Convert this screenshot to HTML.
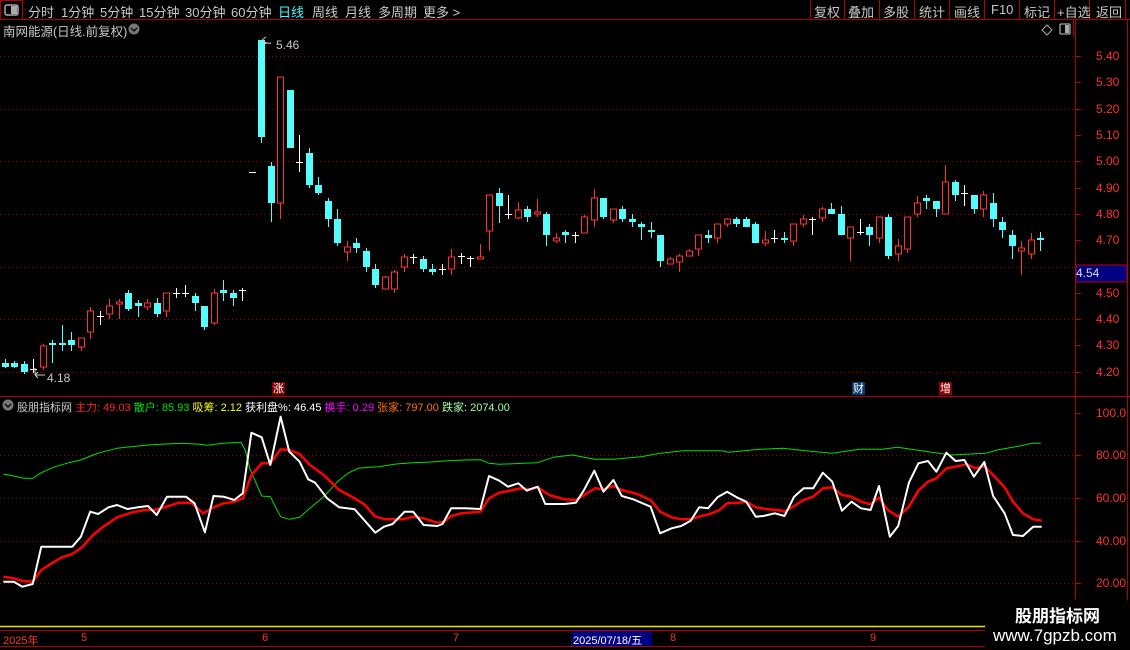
<!DOCTYPE html>
<html><head><meta charset="utf-8">
<style>
*{margin:0;padding:0;box-sizing:border-box}
body{width:1130px;height:650px;background:#000;overflow:hidden;position:relative;font-family:"Liberation Sans","Noto Sans CJK SC",sans-serif;color:#c8c8c8;font-size:13px}
.a{position:absolute;white-space:nowrap}
svg{position:absolute;left:0;top:0}
</style></head><body>
<svg id="s" width="1130" height="650" xmlns="http://www.w3.org/2000/svg">
<g stroke="#b00000" stroke-width="1" fill="none">
<line x1="0" y1="19.5" x2="1130" y2="19.5"/>
<rect x="0.5" y="0.5" width="22" height="19"/>
<line x1="1075.5" y1="19" x2="1075.5" y2="627"/>
<line x1="1127.5" y1="19" x2="1127.5" y2="627"/>
<line x1="0" y1="396.5" x2="1130" y2="396.5"/>
<line x1="0" y1="630.5" x2="985" y2="630.5"/>
<line x1="0" y1="646.5" x2="985" y2="646.5"/>
<line x1="810.5" y1="0" x2="810.5" y2="19"/><line x1="844.5" y1="0" x2="844.5" y2="19"/><line x1="879.5" y1="0" x2="879.5" y2="19"/><line x1="914.5" y1="0" x2="914.5" y2="19"/><line x1="949.5" y1="0" x2="949.5" y2="19"/><line x1="984.5" y1="0" x2="984.5" y2="19"/><line x1="1019.5" y1="0" x2="1019.5" y2="19"/><line x1="1054.5" y1="0" x2="1054.5" y2="19"/><line x1="1089.5" y1="0" x2="1089.5" y2="19"/><line x1="1125.5" y1="0" x2="1125.5" y2="19"/>
<line x1="1073.5" y1="19" x2="1073.5" y2="37"/>
</g>
<rect x="5" y="5" width="13" height="10" rx="2" fill="none" stroke="#aaa" stroke-width="1.5"/><rect x="11" y="6" width="6" height="8" fill="#aaa"/>
<rect x="1060" y="24" width="10" height="10" rx="1" fill="none" stroke="#aaa" stroke-width="1.3"/><rect x="1065" y="25" width="4" height="8" fill="#aaa"/>
<path d="M1047 25 L1052 30 L1047 35 L1042 30 Z" fill="none" stroke="#aaa"/>
<circle cx="134" cy="29" r="5.5" fill="#777"/><path d="M131 28 L134 31 L137 28" stroke="#000" stroke-width="1.3" fill="none"/>
<circle cx="8" cy="405" r="5.5" fill="#777"/><path d="M5 404 L8 407 L11 404" stroke="#000" stroke-width="1.3" fill="none"/>
<g id="grid" stroke="#a00000" stroke-width="1" stroke-dasharray="1,3"></g>
<line x1="0" y1="626.5" x2="985" y2="626.5" stroke="#e8e800" stroke-width="1.5"/>
<g id="cd"></g>
<g fill="none" stroke-linejoin="round">
<polyline id="gl" stroke="#00e000" stroke-width="1"/>
<polyline id="rl" stroke="#ff0000" stroke-width="2.5"/>
<polyline id="wl" stroke="#ffffff" stroke-width="2"/>
</g>
<rect x="1076" y="265" width="51" height="17" fill="#000080" stroke="#c00000"/>
<rect x="572" y="631" width="80" height="15" fill="#000080"/>
<rect x="272" y="382" width="13" height="13" fill="#800000"/>
<rect x="852" y="382" width="13" height="13" fill="#0a3a6a"/>
<rect x="939" y="382" width="13" height="13" fill="#900000"/>
<path d="M262 40 L266 44 M262 40 L266 37 M263 41 Q267 44 271 43" stroke="#ccc" fill="none"/>
<path d="M35 375 L45 375 M35 375 L38 372 M35 375 L38 378 M35 368 L35 375" stroke="#ccc" fill="none"/>
</svg>
<div class="a" style="left:28px;top:2px">分时</div>
<div class="a" style="left:61px;top:2px">1分钟</div>
<div class="a" style="left:100px;top:2px">5分钟</div>
<div class="a" style="left:139px;top:2px">15分钟</div>
<div class="a" style="left:185px;top:2px">30分钟</div>
<div class="a" style="left:231px;top:2px">60分钟</div>
<div class="a" style="left:278px;top:2px;color:#40ffff">日线</div>
<div class="a" style="left:312px;top:2px">周线</div>
<div class="a" style="left:345px;top:2px">月线</div>
<div class="a" style="left:378px;top:2px">多周期</div>
<div class="a" style="left:423px;top:2px">更多 &gt;</div>
<div class="a" style="left:814px;top:2px">复权</div><div class="a" style="left:848px;top:2px">叠加</div><div class="a" style="left:883px;top:2px">多股</div><div class="a" style="left:919px;top:2px">统计</div><div class="a" style="left:954px;top:2px">画线</div><div class="a" style="left:991px;top:2px">F10</div><div class="a" style="left:1024px;top:2px">标记</div><div class="a" style="left:1057px;top:2px">+自选</div><div class="a" style="left:1096px;top:2px">返回</div>
<div class="a" style="left:3px;top:21px;font-size:12.5px">南网能源(日线.前复权)</div>
<div class="a" style="left:276px;top:38px;font-size:12px">5.46</div>
<div class="a" style="left:47px;top:371px;font-size:12px">4.18</div>
<div class="a" style="left:17px;top:399px;font-size:11px">股朋指标网 <span style="color:#ff2020">主力: 49.03</span> <span style="color:#00e000">散户: 85.93</span> <span style="color:#ffff00">吸筹: 2.12</span> <span style="color:#fff">获利盘%: 46.45</span> <span style="color:#ff00ff">换手: 0.29</span> <span style="color:#ff7000">张家: 797.00</span> <span style="color:#a0ffa0">跌家: 2074.00</span></div>
<div class="a" style="left:273px;top:380px;font-size:11px;color:#fff">涨</div>
<div class="a" style="left:853px;top:380px;font-size:11px;color:#fff">财</div>
<div class="a" style="left:940px;top:380px;font-size:11px;color:#fff">增</div>
<div id="ax" style="color:#ff3030;font-size:12px"></div>
<div class="a" style="left:1076px;top:266px;color:#ddd;font-size:12px">4.54</div>
<div class="a" style="left:3px;top:632px;color:#ff3030;font-size:11px">2025年</div>
<div class="a" style="left:81px;top:632px;color:#ff3030;font-size:11px">5</div>
<div class="a" style="left:262px;top:632px;color:#ff3030;font-size:11px">6</div>
<div class="a" style="left:453px;top:632px;color:#ff3030;font-size:11px">7</div>
<div class="a" style="left:573px;top:632px;color:#fff;font-size:11px">2025/07/18/五</div>
<div class="a" style="left:670px;top:632px;color:#ff3030;font-size:11px">8</div>
<div class="a" style="left:870px;top:632px;color:#ff3030;font-size:11px">9</div>
<div class="a" style="left:985px;top:600px;width:145px;height:50px;background:#000"></div>
<div class="a" style="left:1015px;top:602px;color:#fff;font-size:17px;font-weight:bold">股朋指标网</div>
<div class="a" style="left:993px;top:626px;color:#fff;font-size:17px">www.7gpzb.com</div>
<script>
var NS="http://www.w3.org/2000/svg",s=document.getElementById('s');
function el(t,a,p){var e=document.createElementNS(NS,t);for(var k in a)e.setAttribute(k,a[k]);(p||s).appendChild(e);return e}
var g=document.getElementById('grid');
[56,109,161,214,267,319,372,455,498,541,583].forEach(function(y){el('line',{x1:0,y1:y+.5,x2:1075,y2:y+.5},g)});
var ax=document.getElementById('ax'),h='';
var pl=[[56,'5.40'],[82,'5.30'],[109,'5.20'],[135,'5.10'],[161,'5.00'],[188,'4.90'],[214,'4.80'],[240,'4.70'],[293,'4.50'],[319,'4.40'],[345,'4.30'],[372,'4.20'],[413,'100.0'],[455,'80.00'],[498,'60.00'],[541,'40.00'],[583,'20.00']];
pl.forEach(function(p){h+='<div class="a" style="left:1096px;top:'+(p[0]-7)+'px">'+p[1]+'</div>';el('line',{x1:1076,y1:p[0]+.5,x2:1081,y2:p[0]+.5,stroke:'#c00000'})});
ax.innerHTML=h;
var D="c 363 367 359 368|c 363 367 361 368|c 364 372 361 374|w 369 369 359 373|r 346 367 344 370|c 343 345 340 363|c 343 345 325 351|c 340 345 332 351|r 338 347 338 351|r 311 332 307 339|w 316 316 311 325|r 306 314 299 319|r 302 304 299 319|c 293 309 290 311|c 303 306 300 317|r 303 307 299 310|c 303 314 298 317|r 293 311 293 317|w 293 293 288 298|w 293 293 285 297|c 296 303 293 311|c 306 327 306 330|r 293 323 289 325|c 290 293 280 301|c 293 298 290 306|w 290 290 288 301|w 172 172 172 172|c 40 137 40 143|c 166 203 162 222|r 77 203 77 219|c 90 148 90 148|w 162 162 135 172|c 153 185 148 188|c 185 193 177 195|c 201 219 198 227|c 219 243 209 246|r 247 252 241 261|c 243 248 238 253|c 251 267 248 272|c 269 285 264 288|r 277 289 276 289|r 272 289 270 293|r 257 267 254 272|w 257 257 254 264|c 259 269 256 272|c 269 272 264 275|w 269 269 264 275|r 257 269 249 275|w 256 256 253 264|w 258 258 256 267|r 257 259 244 259|r 195 231 195 251|c 193 206 188 223|w 214 214 195 219|r 210 218 202 219|c 209 217 206 222|r 212 214 199 217|c 214 235 212 246|r 238 241 233 243|c 232 235 230 243|w 235 235 232 243|r 217 233 215 233|r 198 220 189 227|c 198 217 198 219|r 209 220 209 223|c 209 219 206 222|c 219 222 214 227|c 224 227 222 240|c 230 232 222 238|c 235 261 235 267|r 259 264 257 264|r 256 262 254 272|r 251 256 249 256|r 235 249 235 256|c 235 238 230 243|r 224 238 224 243|r 219 224 218 227|c 219 224 217 227|c 219 227 217 227|c 224 243 222 243|r 240 243 231 246|w 238 238 230 243|c 238 240 232 243|r 224 241 224 246|r 219 224 215 227|w 219 219 217 235|r 209 218 207 222|c 209 214 203 214|c 214 235 206 235|r 227 238 227 261|w 232 232 219 235|c 227 235 224 246|r 217 238 217 243|c 217 256 214 259|r 246 254 239 261|r 217 249 217 253|r 203 214 196 217|c 198 201 195 209|c 201 209 201 217|r 182 214 165 214|c 182 195 180 201|w 193 193 185 206|c 195 209 195 214|r 195 209 191 217|c 203 219 193 227|c 222 230 217 238|c 235 246 230 259|r 248 251 241 275|r 240 254 233 259|c 238 240 232 251";
var cd=document.getElementById('cd');
D.split('|').forEach(function(r,i){var a=r.split(' '),c=a[0],t=+a[1],b=+a[2],hi=+a[3],lo=+a[4],x=Math.round(4.5+9.5*i)+.5;
var col=c=='c'?'#54fcfc':c=='r'?'#ff3232':'#ffffff';
if(hi<lo)el('line',{x1:x,y1:hi,x2:x,y2:lo,stroke:col},cd);
if(c=='w'){el('line',{x1:x-3.5,y1:t+.5,x2:x+3.5,y2:t+.5,stroke:col},cd);}
else if(c=='c'){el('rect',{x:x-3.5,y:t,width:7,height:Math.max(b-t,2),fill:col},cd);}
else{el('rect',{x:x-3,y:t,width:6,height:Math.max(b-t,2),fill:'#000',stroke:col},cd);}
});
function P(xs,ys){return xs.map(function(x,i){return x+','+ys[i]}).join(' ')}
var wx=[3.4,13.8,22.4,32.7,41.3,72.3,80.9,90.2,98.1,108.5,117.1,127.4,137.7,148,156.7,167,186,194.6,204.9,213.5,223.8,234.2,242.8,251.4,261.7,270.3,280.6,289.3,299.6,308.2,315.1,327.1,339.2,354.7,375.3,384,392.6,404.6,413.2,423.6,437.3,442.5,451.1,464.9,480.4,489,499.3,508,518.3,526.9,530,537.7,545.3,564.4,575.9,583.6,594.3,603.5,613.4,621.8,633.3,650.6,660.1,671.6,681.2,690.7,699.2,708,717.5,727.1,736.7,746.2,755.8,763.4,774.9,784.5,794.1,803.6,813.2,822.8,832.3,841.9,851.5,861,870.6,879,889.8,898.2,908.9,918.4,928,936.4,946.4,955.6,964.4,973.9,984.3,993.1,1004.6,1013,1022.9,1033.2,1041.7];
var wy=[581.7,581.7,586.7,584,546.7,546.7,536.7,511.7,514,507.3,505,509,507.3,506,515,496.7,496.7,503.3,532.3,496,496.7,500,493.3,432.7,437.3,465,416.7,451.7,461.7,479.3,482.7,498.3,507.3,509.3,532.7,526.7,524,511.7,511.7,525,526,524,508.3,508.3,509,476,480.7,486.7,483.3,490.7,489.3,486.7,504,504,502.7,490.7,470.7,491.7,480,496,499.3,506.7,533.3,528.3,526,520.7,507.3,508.3,497.3,491.7,497.3,501.7,516.7,516,513.3,516,496.7,488.3,488.3,472.7,481.7,510.7,501.7,508.3,510,486,536.7,526,482.7,463.3,461,471.7,452.7,461,460,476.7,462,496,513.3,535,536,526.7,526.7];
var rx=[3.4,13.8,22.4,32.7,41.3,51.7,62,72.3,82.6,93,103.3,117.1,130.9,144.6,155,168.7,179.1,191.1,203.2,213.5,223.8,234.2,242.8,251.4,261.7,270.3,280.6,289.3,299.6,309.9,323.7,339.2,354.7,365,375.3,385.7,402.9,413.2,423.6,437.3,444.2,451.1,461.4,480.4,489,499.3,509.6,520,530,537.7,549.1,564.4,575.9,595.1,602.7,613.4,621.8,637.2,650.6,660.1,671.6,681.2,690.7,698.4,709.9,719.4,727.1,738.6,746.2,755.8,767.3,778.8,784.5,794.1,803.6,813.2,822.8,832.3,841.9,851.5,861,870.6,879,887.8,898.2,908.9,918.4,928,936.4,946.4,955.6,966.3,975.8,984.3,993.1,1004.6,1013,1022.9,1033.2,1041.7];
var ry=[576.7,578.3,581,581.7,570,563.3,557.3,554,546.7,535,526.7,517.3,512.7,510,510,506,502.7,502.7,513.3,507.3,503.3,501.7,498.3,475,463.3,463.3,449.3,450,454,465,475,490,498.3,505,516.7,519.3,519.3,516.7,518.3,522.7,521.7,516,513.3,511.7,498.3,492.7,490.7,488.3,489.3,487.3,495,499.3,500,488.3,489.3,486,490,494,500,511.7,517.3,519.3,519.3,516.7,514,510,503.3,502.7,501.7,507.3,509.3,510,511.7,506,500,496.7,488.3,487.3,495,496.7,501.7,504.3,497.7,510,516.7,506.7,490.7,481.7,478.3,468.3,466.7,464.3,468.3,466,475,487.3,501.7,513.3,519.3,520.7];
var gx=[3.4,13.8,24.1,32.7,41.3,55.1,68.9,80.9,93,103.3,117.1,130.9,148,165.3,182.5,199.7,206.6,223.8,241,245.2,249.7,261.7,270.3,280.6,289.3,299.6,309.9,323.7,337.5,347.8,358.1,368.5,378.8,396,413.2,430.4,447.7,464.9,480.4,489,499.3,523.4,537.7,553,572.1,595.1,614.2,641,660.1,683.1,721.4,729,759.6,782.6,805.5,832.3,859.1,882.1,897.4,916.5,928,951,985.4,996.9,1019.9,1031.4,1040.9];
var gy=[474,476,478.3,478.3,472.7,466.7,462.7,460,455,451.7,448.3,446.7,445,444,443.3,444.3,445.3,443.3,442.3,450,468.3,496,496.7,516.7,519.3,517.3,508.3,496.7,481.7,473.3,468.3,467.3,466.7,464,462.7,462,460.7,460,459.7,463.3,464.3,463.3,462.7,457.3,455,459.3,459.3,456.7,453.3,450.7,450.7,452.3,449.3,448.3,450.7,453.3,449.3,449.3,447.3,450,451.7,455,453.3,450,446,443.3,443.3];
document.getElementById('wl').setAttribute('points',P(wx,wy));
document.getElementById('rl').setAttribute('points',P(rx,ry));
document.getElementById('gl').setAttribute('points',P(gx,gy));
</script>
</body></html>
